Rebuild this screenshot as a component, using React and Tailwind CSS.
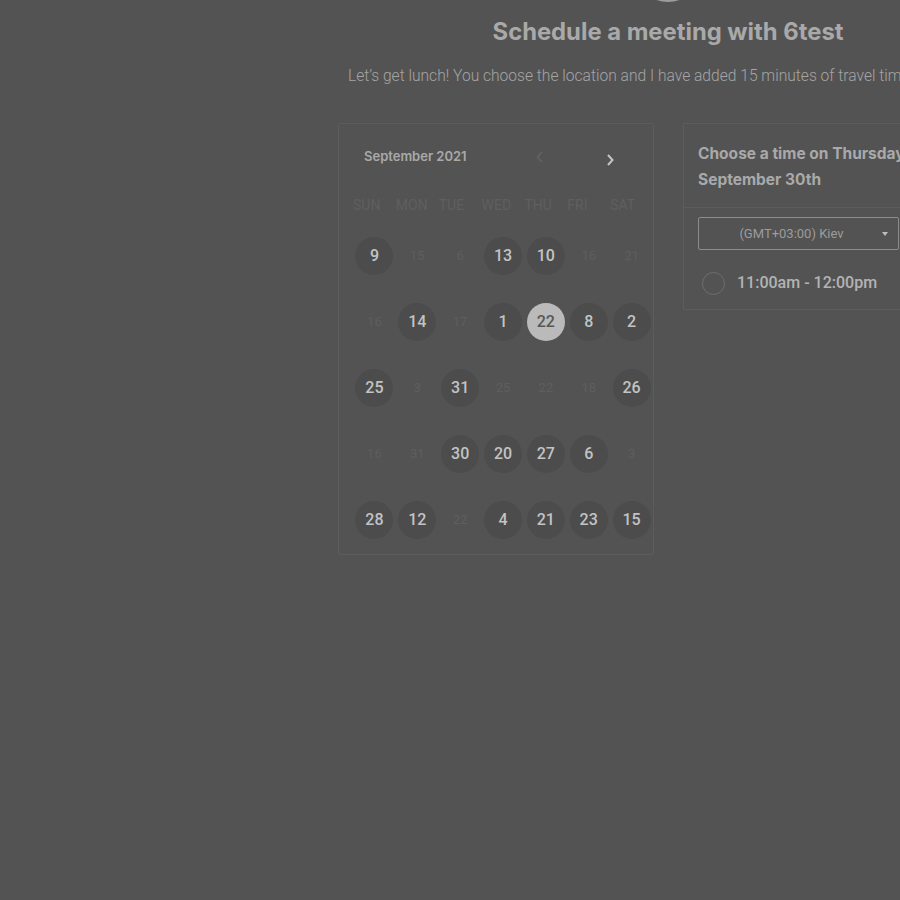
const headers = ['SUN', 'MON', 'TUE', 'WED', 'THU', 'FRI', 'SAT']

// [label, kind] kind: a = available, f = faded, s = selected
const weeks = [
  [['9', 'a'], ['15', 'f'], ['6', 'f'], ['13', 'a'], ['10', 'a'], ['16', 'f'], ['21', 'f']],
  [['16', 'f'], ['14', 'a'], ['17', 'f'], ['1', 'a'], ['22', 's'], ['8', 'a'], ['2', 'a']],
  [['25', 'a'], ['3', 'f'], ['31', 'a'], ['25', 'f'], ['22', 'f'], ['18', 'f'], ['26', 'a']],
  [['16', 'f'], ['31', 'f'], ['30', 'a'], ['20', 'a'], ['27', 'a'], ['6', 'a'], ['3', 'f']],
  [['28', 'a'], ['12', 'a'], ['22', 'f'], ['4', 'a'], ['21', 'a'], ['23', 'a'], ['15', 'a']],
]

function Day({ label, kind }) {
  if (kind === 'f') {
    return (
      <div className="flex h-[66px] items-center justify-center">
        <span className="text-[13px] text-[#5e5e5e]">{label}</span>
      </div>
    )
  }
  const circle =
    kind === 's'
      ? 'bg-[#bababa] text-[#575757]'
      : 'bg-[#4c4c4c] text-[#c3c3c3]'
  return (
    <div className="flex h-[66px] items-center justify-center">
      <span
        className={`flex h-[38px] w-[38px] items-center justify-center rounded-full text-[16px] font-medium ${circle}`}
      >
        {label}
      </span>
    </div>
  )
}

function Calendar() {
  return (
    <div className="w-[316px] shrink-0 rounded-[2px] border border-[#5c5c5c] pl-[14px] pt-[18px] pb-[1px]">
      <div className="flex h-[30px] items-center">
        <span className="ml-[11px] font-['Inter',sans-serif] text-[13px] font-semibold text-[#a9a9a9]">
          September 2021
        </span>
        <svg className="ml-[68px]" width="10" height="14" viewBox="0 0 10 14" fill="none">
          <path d="M7 2 L2.5 7 L7 12" stroke="#626262" strokeWidth="1.8" />
        </svg>
        <svg className="ml-[60px] mt-[5px]" width="10" height="14" viewBox="0 0 10 14" fill="none">
          <path d="M3 2 L7.5 7 L3 12" stroke="#c4c4c4" strokeWidth="2" />
        </svg>
      </div>
      <div className="mt-[23px] grid grid-cols-7">
        {headers.map((h) => (
          <span key={h} className="h-5 text-[14px] leading-5 text-[#5f5f5f]">
            {h}
          </span>
        ))}
      </div>
      <div className="mt-[8px] grid grid-cols-7">
        {weeks.flat().map(([label, kind], i) => (
          <Day key={i} label={label} kind={kind} />
        ))}
      </div>
    </div>
  )
}

function TimePanel() {
  return (
    <div className="w-[240px] shrink-0 border-l border-t border-b border-[#5c5c5c]">
      <div className="border-b border-[#5c5c5c] px-[14px] pt-[17px] pb-[14px]">
        <p className="font-['Inter',sans-serif] text-[15.5px] font-bold leading-[26px] text-[#a9a9a9] whitespace-nowrap">
          Choose a time on Thursday,
          <br />
          September 30th
        </p>
      </div>
      <div className="px-[14px] pt-[9px] pb-[14px]">
        <div className="relative flex h-[33px] w-[201px] items-center justify-center rounded-[2px] border border-[#8c8c8c]">
          <span className="-ml-[14px] text-[13px] text-[#9c9c9c]">(GMT+03:00) Kiev</span>
          <span className="absolute right-[10px] top-[14px] h-0 w-0 border-x-[3.5px] border-t-[4px] border-x-transparent border-t-[#bdbdbd]" />
        </div>
        <div className="mt-[21px] flex items-center">
          <span className="ml-[4px] h-[23px] w-[23px] rounded-full border-[1.5px] border-[#6e6e6e]" />
          <span className="ml-[12px] text-[16px] font-medium text-[#b3b3b3]">11:00am - 12:00pm</span>
        </div>
      </div>
    </div>
  )
}

export default function App() {
  return (
    <div className="h-[900px] w-[900px] overflow-hidden bg-[#535353] font-['Roboto',sans-serif]">
      <div className="ml-[338px] w-[660px]">
        <div className="flex justify-center">
          <div className="-mt-[62px] h-16 w-16 rounded-full border-2 border-[#9c9c9c] bg-[#585858]" />
        </div>
        <h1 className="mt-[14px] text-center font-['Inter',sans-serif] text-[23.8px] font-bold leading-8 text-[#a9a9a9]">
          Schedule a meeting with 6test
        </h1>
        <p className="mt-[18px] ml-[10px] whitespace-nowrap text-[15.6px] font-light leading-5 text-[#a5a5a5]">
          Let’s get lunch! You choose the location and I have added 15 minutes of travel time.
        </p>
        <div className="mt-[37px] flex items-start gap-[29px]">
          <Calendar />
          <TimePanel />
        </div>
      </div>
    </div>
  )
}
